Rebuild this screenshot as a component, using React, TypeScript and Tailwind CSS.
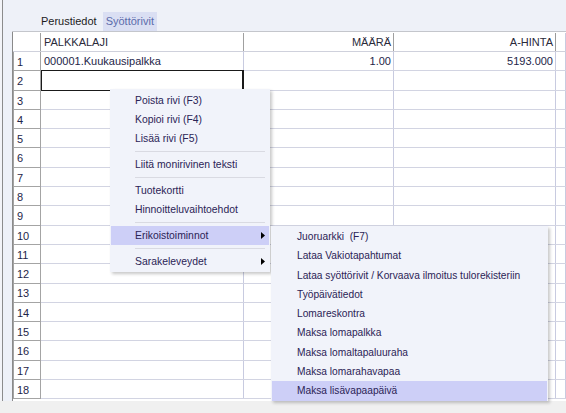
const rows = Array.from({ length: 18 }, (_, i) => i + 1);

const menuItems: (string | null)[] = [
  "Poista rivi (F3)",
  "Kopioi rivi (F4)",
  "Lisää rivi (F5)",
  null,
  "Liitä monirivinen teksti",
  null,
  "Tuotekortti",
  "Hinnoitteluvaihtoehdot",
  null,
  "Erikoistoiminnot",
  null,
  "Sarakeleveydet",
];

const subItems = [
  "Juoruarkki  (F7)",
  "Lataa Vakiotapahtumat",
  "Lataa syöttörivit / Korvaava ilmoitus tulorekisteriin",
  "Työpäivätiedot",
  "Lomareskontra",
  "Maksa lomapalkka",
  "Maksa lomaltapaluuraha",
  "Maksa lomarahavapaa",
  "Maksa lisävapaapäivä",
];

function Arrow() {
  return (
    <svg width="4" height="7" viewBox="0 0 4 7" className="ml-auto mr-[4px]">
      <path d="M0 0 L4 3.5 L0 7 Z" fill="#000" />
    </svg>
  );
}

export default function App() {
  return (
    <div
      className="relative w-[566px] h-[413px] overflow-hidden bg-[#f0f0f0] text-[11px]"
      style={{ fontFamily: '"Liberation Sans", Arial, sans-serif' }}
    >
      <div className="flex h-[401px]">
        <div className="w-[2px] bg-[#f3f4f8]" />
        <div className="w-[1px] bg-[#8c8c8c]" />
        <div className="flex-1 flex flex-col bg-[#eef1f8] pl-[9px]">
          {/* Tabs */}
          <div className="h-[32px] flex items-end pl-[26px] border-b border-[#c4c6cc]">
            <div className="h-[19px] px-[3px] flex items-center text-[#1c1c1c]">Perustiedot</div>
            <div className="h-[19px] ml-[3px] px-[3px] flex items-center bg-[#dadff3] text-[#5b6bab]">
              Syöttörivit
            </div>
          </div>
          {/* Grid */}
          <div className="flex-1 bg-white border-l border-[#8a8a8a] overflow-hidden">
            {/* Header */}
            <div className="flex h-[20px] border-b border-[#cfd1dc] pt-[1px]">
              <div className="w-[28px] border-r border-[#a0a0a0]" />
              <div className="w-[203px] border-r border-[#a0a0a0] pl-[3px] flex items-center text-[#2a2a3a]">
                PALKKALAJI
              </div>
              <div className="w-[150px] border-r border-[#a0a0a0] pr-[2px] flex items-center justify-end text-[#2a2a3a]">
                MÄÄRÄ
              </div>
              <div className="w-[162px] border-r border-[#9a9a9a] pr-[2px] flex items-center justify-end text-[#2a2a3a]">
                A-HINTA
              </div>
              <div className="w-[10px] border-r border-[#c8cbe0]" />
            </div>
            {rows.map((n) => (
              <div key={n} className="flex h-[19.3px] border-b border-[#d2d4e2]">
                <div className="w-[28px] border-r border-b border-l border-[#a4a4a4] -mb-[1px] pl-[3px] pt-[2px] flex items-center text-[#1e2548]">
                  {n}
                </div>
                <div
                  className={
                    n === 2
                      ? "w-[203px] border border-r-2 border-[#1a1a1a] -my-[1px] pl-[3px] flex items-center"
                      : "w-[203px] border-r border-[#c8cbe0] pl-[3px] pt-[1px] flex items-center text-[#1e2548]"
                  }
                >
                  {n === 1 ? "000001.Kuukausipalkka" : ""}
                </div>
                <div className="w-[150px] border-r border-[#c8cbe0] pr-[2px] pt-[1px] flex items-center justify-end text-[#1e2548]">
                  {n === 1 ? "1.00" : ""}
                </div>
                <div className="w-[162px] border-r border-[#c8cbe0] pr-[2px] pt-[1px] flex items-center justify-end text-[#1e2548]">
                  {n === 1 ? "5193.000" : ""}
                </div>
                <div className="w-[10px] border-r border-[#c8cbe0]" />
              </div>
            ))}
          </div>
        </div>
      </div>

      {/* Context menu */}
      <div className="absolute left-[110px] top-[89px] w-[160px] h-[183px] bg-[#f1f3fa] shadow-[2px_2px_3px_rgba(0,0,0,0.22)] pt-[2px] text-[10.4px] text-[#2b2356]">
        {menuItems.map((item, i) =>
          item === null ? (
            <div key={i} className="h-[7px] flex items-center pl-[25px] pr-[5px]">
              <div className="h-[1px] w-full bg-[#d9dae2]" />
            </div>
          ) : (
            <div
              key={i}
              className={
                item === "Erikoistoiminnot"
                  ? "h-[19px] mx-[1px] pl-[24px] flex items-center bg-[#cdcff7]"
                  : "h-[19px] mx-[1px] pl-[24px] flex items-center"
              }
            >
              {item}
              {(item === "Erikoistoiminnot" || item === "Sarakeleveydet") && <Arrow />}
            </div>
          )
        )}
      </div>

      {/* Submenu */}
      <div className="absolute left-[271px] top-[226px] w-[277px] h-[175px] bg-[#f1f3fa] shadow-[2px_2px_3px_rgba(0,0,0,0.22)] pt-[1px] text-[10.2px] text-[#2b2356]">
        {subItems.map((item, i) => (
          <div
            key={i}
            className={
              i === 8
                ? "h-[19.3px] mx-[1px] pl-[25px] flex items-center bg-[#cdcff7]"
                : "h-[19.3px] mx-[1px] pl-[25px] flex items-center"
            }
          >
            <span className="whitespace-pre">{item}</span>
          </div>
        ))}
      </div>
    </div>
  );
}
